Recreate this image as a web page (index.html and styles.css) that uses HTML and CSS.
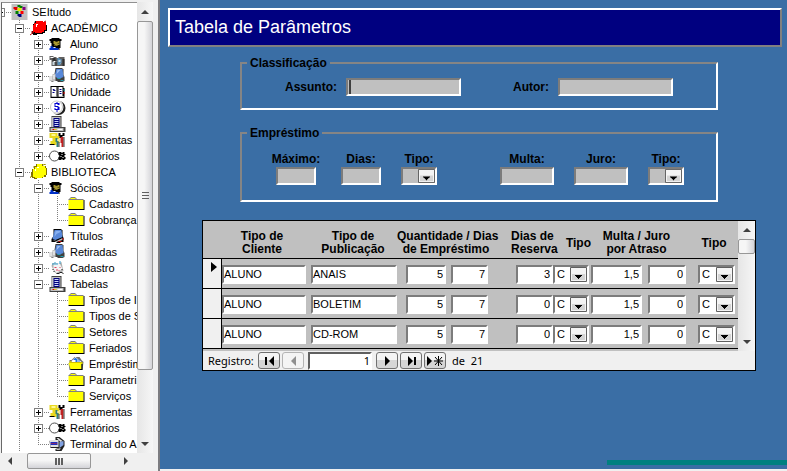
FILE: index.html
```html
<!DOCTYPE html>
<html lang="pt-BR">
<head>
  <meta charset="UTF-8">
  <meta name="viewport" content="width=device-width, initial-scale=1.0">
  <title>SEItudo - Tabela de Parâmetros</title>
  <link rel="stylesheet" href="styles.css">
</head>
<body>

  <!-- icons used by the tree -->
  <svg class="sprite" aria-hidden="true">
    <symbol id="i-root" viewBox="0 0 16 16">
      <path fill="#c0c0c0" d="M0 0h16v16H0z"/>
      <path fill="#008000" d="M6 1h3v1h2v2H8V3H6z"/>
      <path fill="#e00000" d="M2 3h4v3H3V5H2z"/>
      <path fill="#e8e800" d="M6 4h4v3H6z"/>
      <path fill="#800080" d="M11 3h3v3h-3z"/>
      <path fill="#008000" d="M4 7h3v3H4z"/>
      <path fill="#f00" d="M9 7h3v3H9z"/>
      <path fill="#000080" d="M6 10h4v3H7v-1H6z"/>
    </symbol>
    <symbol id="i-red" viewBox="0 0 17 16">
      <path fill="#000" d="M5 1h8v1h3v3h1v6h-2v2h-2v1H7v1H3v-1H2v-3h1V4h1z"/>
      <path fill="#f00" d="M6 1h7v1h3v8h-2v2h-2v1H5v-1H3V5h1V3h2z"/>
      <path fill="#fff" d="M6 4h2v1H7v2H6z"/>
      <path fill="none" stroke="#c00000" d="M0 15l4-3M2 11v2M14 2l2-1"/>
    </symbol>
    <symbol id="i-yellow" viewBox="0 0 17 16">
      <path fill="#807000" d="M6 0h7v2h3v2h1v7h-1v2h-3v1H7v1H4v-1H2v-1H1V8h1V5h2V2h2z"/>
      <path fill="#ff0" d="M7 0h5v2h3v2h1v7h-2v2h-2v1H5v-1H3V5h2V3h2z"/>
      <path fill="#fff" d="M7 3h2v1H7zM5 5h1v2H5z"/>
      <path fill="none" stroke="#a09000" d="M0 14l2-3M3 3h2M13 1l3-1"/>
    </symbol>
    <symbol id="i-person" viewBox="0 0 16 16">
      <path fill="#000" d="M2 2h8v1h2v2h-1v7h-1v2h-1v-1H3v-2H2V7H1V5H0V3h2z"/>
      <path fill="#a89830" d="M4 5h2v1h2V5h2v4H8v1H5V8H4z"/>
      <path fill="#605818" d="M6 5h1v1H6zM8 7h2v1H8zM5 9h2v1H5z"/>
      <path fill="#0030c8" d="M1 10h2v1h3v1h3v2H0v-2h1z"/>
      <path fill="#f0f0f0" d="M4 11h2v1H4z"/>
    </symbol>
    <symbol id="i-prof" viewBox="0 0 16 16">
      <path fill="#606060" d="M0 4h4v1h3v1h2V5h6v9H2V8H0z"/>
      <path fill="#fff" d="M1 5h3v1H1zM4 9h3v1H4zM9 8h2v4H9z"/>
      <path fill="#303030" d="M3 6h3v2h1v6H6V9H3zM13 7h2v7h-2z"/>
      <path fill="#5890b8" d="M8 6h2v1h2v4h-1v2H8z"/>
      <path fill="#c8d8e0" d="M3 10h2v3H3zM9 8h2v2H9z"/>
    </symbol>
    <symbol id="i-book" viewBox="0 0 16 16">
      <path fill="#000" d="M4 1h8v1h1v5l1 3v4h-3v1H7v-1H2v-3l2-3z"/>
      <path fill="#5888d8" d="M5 2h7l1 7-7 3-3-1z"/>
      <path fill="#88b0f0" d="M6 3h5v1l-4 2-2 3z"/>
      <path fill="#c0c0c0" d="M3 12l4 1 6-3v2l-6 2z"/>
      <path fill="#c00000" d="M9 13h3v1H9zM13 10h1v2h-1z"/>
    </symbol>
    <symbol id="i-hand" viewBox="0 0 16 16">
      <path fill="#404040" d="M6 0h7v1h1v6l1 2v4l-2 1H8v-1H5l-3 1V9l3-3z"/>
      <path fill="#5888d8" d="M7 1h6l1 8-5 2-4-3z"/>
      <path fill="#a0c0f0" d="M8 2h3l-3 3-1 1z"/>
      <path fill="#c0c0c0" d="M0 8h3v5H0zM3 6h3v7H3z"/>
      <path fill="#fff" d="M1 8h1v4H1zM4 7h1v4H4z"/>
      <path fill="#20a0b0" d="M8 10h3v1H8zM11 12h3v1h-3z"/>
    </symbol>
    <symbol id="i-open" viewBox="0 0 16 16">
      <path fill="#000" d="M1 2h13v2h1v10H1z"/>
      <path fill="#fff" d="M2 3h5v9H2zM9 3h4v9H9z"/>
      <path fill="#000080" d="M3 5h2v1h1v1H4zM3 8h2v1H3zM10 5h2v1h-2zM10 7h2v1h-2zM10 9h2v1h-2z"/>
      <path fill="#808080" d="M7 3h1v10H7z"/>
      <path fill="#00a0a0" d="M14 5h1v2h-1z"/>
      <path fill="#e00000" d="M14 8h1v2h-1z"/>
      <path fill="#c0c0c0" d="M2 12h5v1H2zM9 12h5v1H9z"/>
    </symbol>
    <symbol id="i-money" viewBox="0 0 16 16">
      <circle cx="9" cy="8" r="7" fill="#202020"/>
      <circle cx="7" cy="7" r="7" fill="#fff"/>
      <circle cx="7" cy="7" r="6" fill="none" stroke="#c8c8c8"/>
      <path fill="#0000d0" d="M7 2h1v1h2v2H8V4H6v2h3v1h1v3H8v2H7v-2H5V8h1v1h2V7H5V3h2z"/>
    </symbol>
    <symbol id="i-table" viewBox="0 0 16 16">
      <path fill="#404040" d="M2 0h10v11h4v5H0v-5h2z"/>
      <path fill="#c0c0c0" d="M2 1h9v10H2zM1 12h13v3H1z"/>
      <path fill="#000080" d="M4 2h6v9H4z"/>
      <path fill="#d0d8f8" d="M5 3h4v1H5zM5 5h4v1H5zM5 7h4v1H5zM5 9h4v1H5z"/>
      <path fill="#e00000" d="M3 13h2v1H3z"/>
      <path fill="#e8d000" d="M5 13h2v1H5z"/>
      <path fill="#fff" d="M8 13h5v1H8z"/>
    </symbol>
    <symbol id="i-tools" viewBox="0 0 16 16">
      <path fill="#e8d820" d="M0 1h8v3h2v7H7v2H1V9h2V6H0z"/>
      <path fill="#fff890" d="M2 2h4v2H2z"/>
      <path fill="#000" d="M0 12h5v1H0zM9 1h2v2h2V1h2v3h-2v2h-3V4H9z"/>
      <path fill="#308080" d="M6 6h2v3h1v6H7v-5H6z"/>
      <path fill="#c02020" d="M11 5h3v10h-2v-4h-1z"/>
      <path fill="#404040" d="M14 5h1v10h-1zM9 10h1v5H9z"/>
      <path fill="#fff" d="M8 7h1v2H8z"/>
    </symbol>
    <symbol id="i-report" viewBox="0 0 16 16">
      <circle cx="5" cy="8" r="5" fill="#fff" stroke="#505050"/>
      <path fill="#000" d="M9 4h3v1h1V4h2v2h1v1h-1v2h1v2h-1v1h-2v-1h-1v1H9V9h1V7H9z"/>
      <path fill="#fff" d="M12 6h1v1h-1zM13 9h1v1h-1zM11 8h1v1h-1z"/>
    </symbol>
    <symbol id="i-card" viewBox="0 0 16 16">
      <path fill="#b0b0b0" d="M3 3h7l2-1 1 5 1 4-6 3-3-2-3-6z"/>
      <path fill="#f4f4f4" d="M4 4l6-1 3 6-6 4-3-4z"/>
      <path fill="#30a0d0" d="M3 3h1v2H3zM5 2h1v3H5zM7 3h1v2H7zM10 1h1v3h-1z"/>
      <path fill="#e04060" d="M5 7h2v1H5zM7 9h1v2H7zM10 7h1v1h-1zM9 10h1v1H9z"/>
      <path fill="#202020" d="M7 13h3v1H7zM10 12h3v1h-3zM13 13h1v1h-1zM12 9h1v1h-1zM3 9h1v1H3zM4 11h1v1H4z"/>
    </symbol>
    <symbol id="i-folder" viewBox="0 0 16 16">
      <path fill="#808080" d="M0 3h1V2h1V1h5v1h1v1h7v1H0z"/>
      <path fill="#ff0" d="M0 4h15v9H0zM2 2h5v1H2z"/>
      <path fill="#000" d="M0 13h15V4h1v10H0z"/>
    </symbol>
    <symbol id="i-folder-open" viewBox="0 0 16 16">
      <path fill="#707070" d="M1 4h2l3-3h5l2 3 2 2-1 8H1L0 7h1z"/>
      <path fill="#fff" d="M3 5l4-4 6 5H3z"/>
      <path fill="#2070e0" d="M6 2h2v1h1v3H7V4H5V3h1zM10 3h1v3h-1z"/>
      <path fill="#d0c000" d="M1 5h2v1h11v2H1z"/>
      <path fill="#ff0" d="M0 7h13v6H2z"/>
      <path fill="#000" d="M2 13h11V8h1v6H2z"/>
    </symbol>
    <symbol id="i-terminal" viewBox="0 0 16 16">
      <path fill="#202020" d="M6 1h4l5 4v5l-3 5H6v-2l3-1H1L0 5l6-1z"/>
      <path fill="#e0e0e0" d="M0 4h9v7H1zM7 2h2l4 3-2 1z"/>
      <path fill="#80a0e0" d="M10 6l4-1v4l-4 3z"/>
      <path fill="#2030c0" d="M1 6h7v3H1z"/>
      <path fill="#e02020" d="M2 7h1v1H2zM4 7h1v1H4zM6 7h1v1H6z"/>
      <path fill="#c0c0c0" d="M7 13l4-1v1l-1 1H7z"/>
    </symbol>
  </svg>

  <aside class="sidebar">
    <nav class="tree">
      <ul>
        <li>
          <div class="node root"><button class="toggle" aria-label="Recolher"></button><svg class="icon"><use href="#i-root"/></svg><a href="#">SEItudo</a></div>
          <ul>
            <li>
              <div class="node"><button class="toggle" aria-label="Recolher"></button><svg class="icon"><use href="#i-red"/></svg><a href="#">ACADÊMICO</a></div>
              <ul>
                <li><div class="node"><button class="toggle plus" aria-label="Expandir"></button><svg class="icon"><use href="#i-person"/></svg><a href="#">Aluno</a></div></li>
                <li><div class="node"><button class="toggle plus" aria-label="Expandir"></button><svg class="icon"><use href="#i-prof"/></svg><a href="#">Professor</a></div></li>
                <li><div class="node"><button class="toggle plus" aria-label="Expandir"></button><svg class="icon"><use href="#i-hand"/></svg><a href="#">Didático</a></div></li>
                <li><div class="node"><button class="toggle plus" aria-label="Expandir"></button><svg class="icon"><use href="#i-open"/></svg><a href="#">Unidade</a></div></li>
                <li><div class="node"><button class="toggle plus" aria-label="Expandir"></button><svg class="icon"><use href="#i-money"/></svg><a href="#">Financeiro</a></div></li>
                <li><div class="node"><button class="toggle plus" aria-label="Expandir"></button><svg class="icon"><use href="#i-table"/></svg><a href="#">Tabelas</a></div></li>
                <li><div class="node"><button class="toggle plus" aria-label="Expandir"></button><svg class="icon"><use href="#i-tools"/></svg><a href="#">Ferramentas</a></div></li>
                <li><div class="node"><button class="toggle plus" aria-label="Expandir"></button><svg class="icon"><use href="#i-report"/></svg><a href="#">Relatórios</a></div></li>
              </ul>
            </li>
            <li class="more">
              <div class="node"><button class="toggle" aria-label="Recolher"></button><svg class="icon"><use href="#i-yellow"/></svg><a href="#">BIBLIOTECA</a></div>
              <ul>
                <li>
                  <div class="node"><button class="toggle" aria-label="Recolher"></button><svg class="icon"><use href="#i-person"/></svg><a href="#">Sócios</a></div>
                  <ul>
                    <li><div class="node leaf"><svg class="icon"><use href="#i-folder"/></svg><a href="#">Cadastro</a></div></li>
                    <li><div class="node leaf"><svg class="icon"><use href="#i-folder"/></svg><a href="#">Cobrança</a></div></li>
                  </ul>
                </li>
                <li><div class="node"><button class="toggle plus" aria-label="Expandir"></button><svg class="icon"><use href="#i-book"/></svg><a href="#">Títulos</a></div></li>
                <li><div class="node"><button class="toggle plus" aria-label="Expandir"></button><svg class="icon"><use href="#i-hand"/></svg><a href="#">Retiradas</a></div></li>
                <li><div class="node"><button class="toggle plus" aria-label="Expandir"></button><svg class="icon"><use href="#i-card"/></svg><a href="#">Cadastro</a></div></li>
                <li>
                  <div class="node"><button class="toggle" aria-label="Recolher"></button><svg class="icon"><use href="#i-table"/></svg><a href="#">Tabelas</a></div>
                  <ul>
                    <li><div class="node leaf"><svg class="icon"><use href="#i-folder"/></svg><a href="#">Tipos de I</a></div></li>
                    <li><div class="node leaf"><svg class="icon"><use href="#i-folder"/></svg><a href="#">Tipos de S</a></div></li>
                    <li><div class="node leaf"><svg class="icon"><use href="#i-folder"/></svg><a href="#">Setores</a></div></li>
                    <li><div class="node leaf"><svg class="icon"><use href="#i-folder"/></svg><a href="#">Feriados</a></div></li>
                    <li><div class="node leaf"><svg class="icon"><use href="#i-folder-open"/></svg><a href="#">Empréstim</a></div></li>
                    <li><div class="node leaf"><svg class="icon"><use href="#i-folder"/></svg><a href="#">Parametriz</a></div></li>
                    <li><div class="node leaf"><svg class="icon"><use href="#i-folder"/></svg><a href="#">Serviços</a></div></li>
                  </ul>
                </li>
                <li><div class="node"><button class="toggle plus" aria-label="Expandir"></button><svg class="icon"><use href="#i-tools"/></svg><a href="#">Ferramentas</a></div></li>
                <li><div class="node"><button class="toggle plus" aria-label="Expandir"></button><svg class="icon"><use href="#i-report"/></svg><a href="#">Relatórios</a></div></li>
                <li><div class="node leaf"><svg class="icon"><use href="#i-terminal"/></svg><a href="#">Terminal do A</a></div></li>
              </ul>
            </li>
          </ul>
        </li>
      </ul>
    </nav>
    <div class="scroll-y">
      <button class="arrow up" aria-label="Subir"></button>
      <div class="thumb"></div>
      <button class="arrow down" aria-label="Descer"></button>
    </div>
    <div class="scroll-x">
      <button class="arrow left" aria-label="Esquerda"></button>
      <div class="thumb"></div>
      <button class="arrow right" aria-label="Direita"></button>
    </div>
  </aside>

  <main>
    <h1>Tabela de Parâmetros</h1>

    <form class="content">
      <fieldset>
        <legend>Classificação</legend>
        <div class="classif">
          <label for="assunto">Assunto:</label>
          <input type="text" id="assunto" class="caret">
          <label for="autor">Autor:</label>
          <input type="text" id="autor">
        </div>
      </fieldset>

      <fieldset>
        <legend>Empréstimo</legend>
        <div class="emprest">
          <div class="group">
            <div class="field w50"><label for="maximo">Máximo:</label><input type="text" id="maximo" class="w40"></div>
            <div class="field w40"><label for="dias">Dias:</label><input type="text" id="dias"></div>
            <div class="field w36"><label for="tipo1">Tipo:</label><select id="tipo1"><option></option><option>C</option></select></div>
          </div>
          <div class="group">
            <div class="field w54"><label for="multa">Multa:</label><input type="text" id="multa"></div>
            <div class="field w54"><label for="juro">Juro:</label><input type="text" id="juro"></div>
            <div class="field w36"><label for="tipo2">Tipo:</label><select id="tipo2"><option></option><option>C</option></select></div>
          </div>
        </div>
      </fieldset>

      <section class="subform">
        <div class="grid">
          <table>
            <colgroup>
              <col class="c-sel"><col class="c-cliente"><col class="c-pub"><col class="c-qtd"><col class="c-dias"><col class="c-res"><col class="c-tipo"><col class="c-multa"><col class="c-juro"><col class="c-tipo2">
            </colgroup>
            <thead>
              <tr>
                <th></th>
                <th class="h-cliente">Tipo de<br>Cliente</th>
                <th class="h-pub">Tipo de<br>Publicação</th>
                <th class="h-qtd" colspan="2">Quantidade / Dias<br>de Empréstimo</th>
                <th class="h-res">Dias de<br>Reserva</th>
                <th class="h-tipo">Tipo</th>
                <th class="h-multa" colspan="2">Multa / Juro<br>por Atraso</th>
                <th class="h-tipo2">Tipo</th>
              </tr>
            </thead>
            <tbody>
              <tr>
                <td class="sel current"></td>
                <td><input type="text" value="ALUNO" aria-label="Cliente"></td>
                <td><input type="text" value="ANAIS" aria-label="Publicação"></td>
                <td class="num"><input type="text" value="5" aria-label="Quantidade"></td>
                <td class="num"><input type="text" value="7" aria-label="Dias"></td>
                <td class="num"><input type="text" value="3" aria-label="Reserva"></td>
                <td><select aria-label="Tipo"><option>C</option></select></td>
                <td class="num"><input type="text" value="1,5" aria-label="Multa"></td>
                <td class="num"><input type="text" value="0" aria-label="Juro"></td>
                <td><select aria-label="Tipo"><option>C</option></select></td>
              </tr>
              <tr>
                <td class="sel"></td>
                <td><input type="text" value="ALUNO" aria-label="Cliente"></td>
                <td><input type="text" value="BOLETIM" aria-label="Publicação"></td>
                <td class="num"><input type="text" value="5" aria-label="Quantidade"></td>
                <td class="num"><input type="text" value="7" aria-label="Dias"></td>
                <td class="num"><input type="text" value="0" aria-label="Reserva"></td>
                <td><select aria-label="Tipo"><option>C</option></select></td>
                <td class="num"><input type="text" value="1,5" aria-label="Multa"></td>
                <td class="num"><input type="text" value="0" aria-label="Juro"></td>
                <td><select aria-label="Tipo"><option>C</option></select></td>
              </tr>
              <tr>
                <td class="sel"></td>
                <td><input type="text" value="ALUNO" aria-label="Cliente"></td>
                <td><input type="text" value="CD-ROM" aria-label="Publicação"></td>
                <td class="num"><input type="text" value="5" aria-label="Quantidade"></td>
                <td class="num"><input type="text" value="7" aria-label="Dias"></td>
                <td class="num"><input type="text" value="0" aria-label="Reserva"></td>
                <td><select aria-label="Tipo"><option>C</option></select></td>
                <td class="num"><input type="text" value="1,5" aria-label="Multa"></td>
                <td class="num"><input type="text" value="0" aria-label="Juro"></td>
                <td><select aria-label="Tipo"><option>C</option></select></td>
              </tr>
            </tbody>
          </table>
          <div class="scroll-y">
            <button type="button" class="arrow up" aria-label="Subir"></button>
            <div class="thumb"></div>
            <button type="button" class="arrow down" aria-label="Descer"></button>
          </div>
        </div>
        <div class="navbar">
          <label for="registro">Registro:</label>
          <button type="button" aria-label="Primeiro"><svg width="13" height="10"><path d="M2 1h2v8H2zM11 0v10L6 5z"/></svg></button>
          <button type="button" aria-label="Anterior" disabled><svg width="13" height="10"><path d="M9 0v10L4 5z"/></svg></button>
          <input type="text" id="registro" value="1">
          <button type="button" aria-label="Próximo"><svg width="13" height="10"><path d="M4 0v10l5-5z"/></svg></button>
          <button type="button" aria-label="Último"><svg width="13" height="10"><path d="M3 0v10l5-5zM9 1h2v8H9z"/></svg></button>
          <button type="button" aria-label="Novo"><svg width="18" height="10"><path d="M1 0v10l5-5z"/><path fill="none" stroke="#000" d="M12.500 0v10M8 5h9M9 1l7 8M16 1L9 9"/></svg></button>
          <span class="total">de&nbsp; 21</span>
        </div>
      </section>
    </form>

    <div class="progress"></div>
  </main>

</body>
</html>
```
FILE: styles.css
```css
* {
  box-sizing: border-box;
}

body {
  margin: 0;
  height: 100vh;
  display: flex;
  overflow: hidden;
  background: #f0f0f0;
  color: #000;
  font-family: "Liberation Sans", Arial, sans-serif;
  font-size: 11px;
}

input, select, button {
  margin: 0;
  padding: 0;
  border-radius: 0;
  font: inherit;
  color: #000;
}

input, select {
  border: 2px solid;
  border-color: #7c7c7c #fff #fff #7c7c7c;
  outline: 0;
}

ul {
  list-style: none;
  margin: 0;
  padding: 0;
}

.sprite {
  position: absolute;
  width: 0;
  height: 0;
}

/* sidebar */
.sidebar {
  flex: none;
  width: 160px;
  display: grid;
  grid-template-columns: 1fr 16px;
  grid-template-rows: 1fr 16px;
  padding: 2px 5px 2px 1px;
  border-right: 2px solid #7c7c80;
  background: #f0f0f0;
}

.tree {
  overflow: hidden;
  padding-top: 1px;
  border-top: 1px solid #909090;
  border-left: 1px solid #696969;
  background: #fff;
}

.tree > ul {
  margin-left: -9px;
}

.tree ul ul {
  margin-left: 19px;
}

.tree ul ul li {
  background: repeating-linear-gradient(#808080 0 1px, transparent 1px 2px) 7px 0 / 1px 100% no-repeat;
}

.tree ul ul li:last-child {
  background-size: 1px 9px;
}

.tree ul ul li.more {
  background-size: 1px 100%;
}

.node {
  display: flex;
  align-items: center;
  height: 16px;
  white-space: nowrap;
  background: repeating-linear-gradient(90deg, #808080 0 1px, transparent 1px 2px) 7px 8px / 12px 1px no-repeat;
}

.leaf {
  padding-left: 18px;
}

.node a {
  color: #000;
  text-decoration: none;
  margin-left: 4px;
}

.icon {
  flex: none;
  width: 17px;
  height: 16px;
}

.toggle {
  flex: none;
  width: 9px;
  height: 9px;
  margin: 1px 6px 0 3px;
  border: 1px solid #808080;
  background: linear-gradient(#000, #000) center / 5px 1px no-repeat, #fff;
}

.toggle.plus {
  background: linear-gradient(#000, #000) center / 5px 1px no-repeat, linear-gradient(#000, #000) center / 1px 5px no-repeat, #fff;
}

/* scrollbars */
.scroll-y {
  display: flex;
  flex-direction: column;
  background: linear-gradient(90deg, #e6e6e6, #f6f6f6);
}

.scroll-x {
  display: flex;
  background: #f0f0f0;
}

.thumb {
  border: 1px solid #979797;
  border-radius: 2px;
}

.scroll-y .thumb {
  background: linear-gradient(90deg, #f6f6f6 45%, #d4d4d8);
}

.scroll-x .thumb {
  width: 64px;
  background: repeating-linear-gradient(90deg, #606060 0 2px, transparent 2px 3px) center / 8px 7px no-repeat, linear-gradient(#f6f6f6 45%, #d4d4d8);
}

.sidebar .scroll-y .thumb {
  height: 349px;
  background: repeating-linear-gradient(#606060 0 1px, transparent 1px 3px) 4px 170px / 7px 8px no-repeat, linear-gradient(90deg, #f6f6f6 45%, #d4d4d8);
}

.arrow {
  flex: none;
  width: 16px;
  height: 19px;
  border: 0;
  background: none;
  display: flex;
  align-items: center;
  justify-content: center;
}

.arrow::before {
  content: "";
  border: 4px solid transparent;
}

.up::before {
  border-top: 0;
  border-bottom-color: #404040;
}

.down::before {
  border-bottom: 0;
  border-top-color: #404040;
}

.left::before {
  border-left: 0;
  border-right-color: #404040;
}

.right::before {
  border-right: 0;
  border-left-color: #404040;
}

.down, .right {
  margin-top: auto;
}

.scroll-x .arrow {
  width: 18px;
  height: 16px;
  margin-right: 8px;
}

.scroll-x .right {
  margin: 0 2px 0 auto;
}

/* main */
main {
  flex: 1;
  display: flex;
  flex-direction: column;
  margin-bottom: 2px;
  padding: 8px 0 4px 8px;
  background: #3a6ea5;
}

h1 {
  margin: 0 5px 0 0;
  padding: 0 5px;
  border: 2px solid;
  border-color: #fff #808080 #808080 #fff;
  background: #000080;
  color: #fff;
  font-size: 18px;
  font-weight: normal;
  line-height: 35px;
}

.content {
  margin: 8px 31px 0 34px;
}

fieldset {
  min-width: 0;
  margin: 0 38px 15px;
  padding: 0;
  border: 2px solid;
  border-color: #858585 #fff #fff #858585;
  font-size: 12px;
  font-weight: bold;
}

legend {
  margin-left: 5px;
  padding: 0 3px;
  line-height: 16px;
}

fieldset input, fieldset select {
  height: 18px;
  background-color: #c0c0c0;
}

.classif {
  display: flex;
  align-items: center;
  padding: 7px 43px 12px;
}

.classif label {
  flex: 1;
  text-align: right;
  padding-right: 9px;
}

.classif label:first-of-type {
  flex: none;
  width: 61px;
}

.classif input {
  width: 115px;
}

.caret {
  background-image: linear-gradient(#404040, #404040);
  background-position: 1px 0;
  background-size: 2px 100%;
  background-repeat: no-repeat;
}

.emprest {
  display: flex;
  justify-content: space-between;
  padding: 11px 32px 15px 29px;
}

.group {
  display: flex;
  gap: 20px;
}

.field {
  display: flex;
  flex-direction: column;
  align-items: center;
  line-height: 15px;
}

.field input, .field select {
  width: 100%;
}

.w36 { width: 36px; }
.w40, .field .w40 { width: 40px; }
.w50 { width: 50px; }
.w54 { width: 54px; }

select {
  appearance: none;
  padding-left: 2px;
  background: #fff url("data:image/svg+xml,%3Csvg xmlns='http://www.w3.org/2000/svg' width='17' height='15'%3E%3Cpath fill='%23f4f4f4' stroke='%23606060' d='M.5 .5h16v14H.5z'/%3E%3Cpath fill='%23d4d4d4' d='M2 7h13v6H2z'/%3E%3Cpath d='M5 8h7v1h-1v1h-1v1H9v1H8v-1H7v-1H6V9H5z'/%3E%3C/svg%3E") right top no-repeat;
}

fieldset select {
  background-size: 17px 14px;
}

/* subform */
.subform {
  margin-top: 18px;
  border: 1px solid #000;
  background: #f0f0f0;
}

.grid {
  display: flex;
}

.grid .thumb {
  height: 15px;
}

.grid .arrow {
  width: 17px;
  height: 18px;
}

table {
  flex: 1;
  table-layout: fixed;
  border-spacing: 0;
  width: 0;
  border-bottom: 2px solid #c0c0c0;
  background: #c0c0c0;
}

.c-sel { width: 19px; }
.c-cliente { width: 89px; }
.c-pub { width: 86px; }
.c-qtd { width: 54px; }
.c-dias { width: 60px; }
.c-res { width: 42px; }
.c-tipo { width: 38px; }
.c-multa { width: 57px; }
.c-juro { width: 50px; }
.c-tipo2 { width: 40px; }

th, td {
  padding: 0;
  border-bottom: 1px solid #000;
}

th {
  height: 38px;
  padding-top: 9px;
  padding-bottom: 2px;
  font-size: 12px;
  line-height: 13px;
  white-space: nowrap;
}

.h-cliente { padding-right: 9px; }
.h-pub { padding-right: 2px; }
.h-qtd { padding-right: 16px; }
.h-res { text-align: left; }
.h-tipo { text-align: right; }
.h-multa { padding-right: 16px; }
.h-tipo2 { padding-right: 8px; }

td {
  height: 30px;
  padding: 6px 3px 4px 0;
}

td:nth-child(2) { padding-right: 5px; }
td:nth-child(3) { padding-right: 0; }
td:nth-child(4) { padding-left: 9px; padding-right: 5px; }
td:nth-child(5) { padding-right: 23px; }
td:nth-child(6) { padding-left: 5px; padding-right: 0; }
td:nth-child(7) { padding-right: 2px; }
td:nth-child(8) { padding-right: 6px; }
td:nth-child(9) { padding-right: 12px; }

.sel {
  border-right: 1px solid #000;
  background: #f0f0f0;
}

.current {
  vertical-align: top;
  padding: 3px 0 0 8px;
}

.current::before {
  content: "";
  display: block;
  width: 0;
  border: 5px solid transparent;
  border-left: 6px solid #000;
  border-right: 0;
}

td input, td select {
  display: block;
  width: 100%;
  height: 19px;
  padding-bottom: 2px;
  background-color: #fff;
}

.num input {
  text-align: right;
  padding-right: 1px;
}

.navbar {
  display: flex;
  align-items: center;
  gap: 2px;
  height: 19px;
  padding-left: 5px;
  font-family: "Noto Sans", sans-serif;
}

.navbar label {
  width: 48px;
}

.navbar button {
  display: flex;
  align-items: center;
  justify-content: center;
  width: 22px;
  height: 17px;
  border: 1px solid #707070;
  border-radius: 3px;
  background: linear-gradient(#f4f4f4 50%, #d6d6d6 50%);
}

.navbar button:disabled {
  border-color: #b4b4b4;
  background: #f4f4f4;
  fill: #909090;
}

.navbar input {
  width: 64px;
  height: 18px;
  margin: 0 2px;
  border-color: #606060 #fff #fff #606060;
  background: #fff;
  text-align: right;
}

.total {
  margin-left: 4px;
}

.progress {
  width: 180px;
  height: 5px;
  margin: auto 0 0 auto;
  background: #008080;
}
```
